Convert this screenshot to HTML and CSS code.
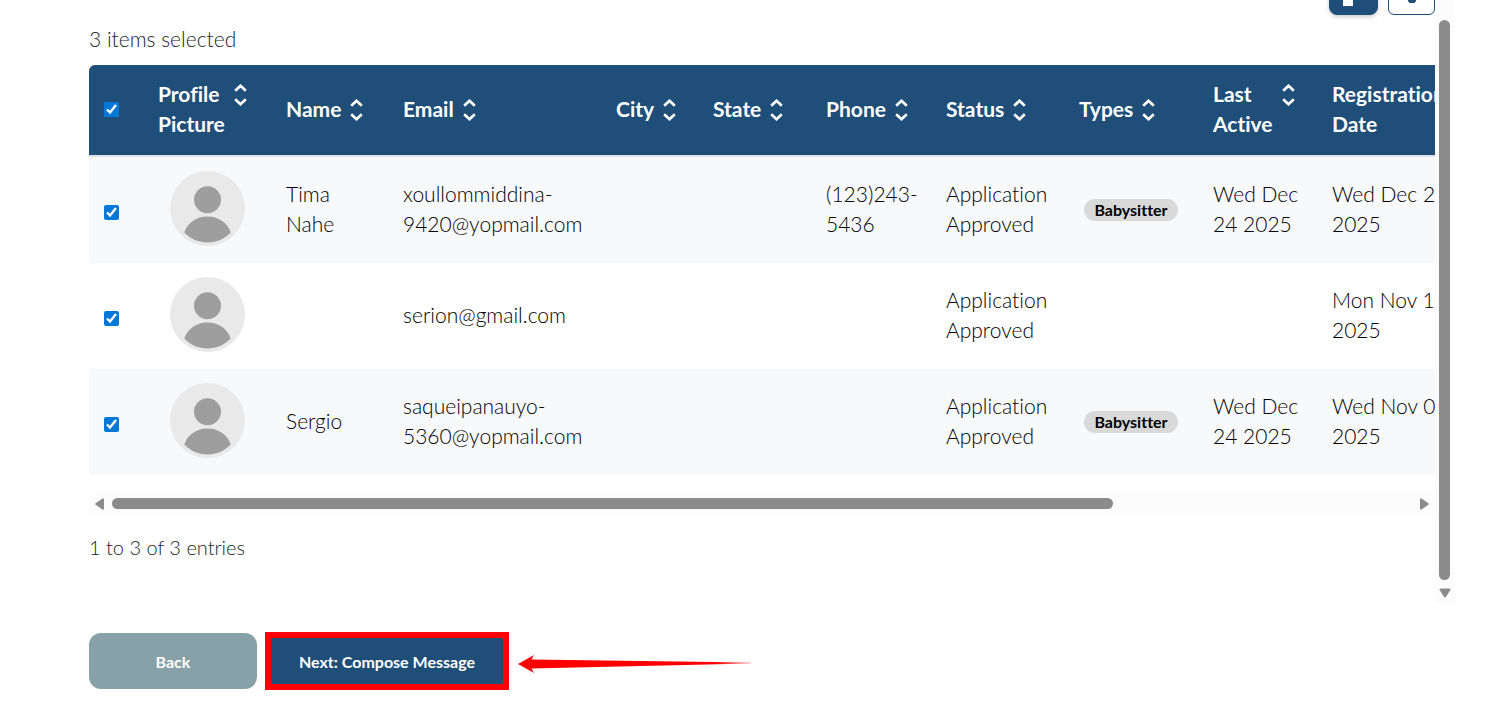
FILE: index.html
```html
<!DOCTYPE html>
<html lang="en">

<head>
    <meta charset="UTF-8">
    <meta name="viewport" content="width=device-width, initial-scale=1.0">
    <title>Select Recipients</title>
    <link rel="stylesheet" href="styles.css">
</head>

<body>
    <!-- shared icons -->
    <svg class="sprite" width="0" height="0" aria-hidden="true">
        <symbol id="sort" viewBox="0 0 13 22">
            <path d="M1.2 6.800 6.500 1.800 11.800 6.800M1.200 15.200 6.500 20.200 11.800 15.200" fill="none" stroke="#fff" stroke-width="2.700" />
        </symbol>
        <symbol id="avatar" viewBox="0 0 75 75">
            <circle cx="37.5" cy="37.5" r="37.5" fill="#e9e9e9" />
            <circle cx="37.5" cy="28.8" r="13.5" fill="#9e9e9e" />
            <path d="M14.3 61.5C17.5 51.500 27 45.500 37.500 45.500S57.500 51.500 60.700 61.500C54.500 68 46.500 71.500 37.500 71.500S20.500 68 14.300 61.500Z" fill="#9e9e9e" />
        </symbol>
        <symbol id="tri" viewBox="0 0 9 12">
            <path d="M8 1.300V10.700L1.200 6Z" fill="#8b8b8b" stroke="#8b8b8b" stroke-width="2" stroke-linejoin="round" />
        </symbol>
    </svg>

    <main class="page">
        <section class="panel">
            <div class="content">
                <div class="toolbar">
                    <button class="tool tool-solid" type="button" aria-label="Columns">
                        <svg width="10" height="20" viewBox="0 0 10 20"><path d="M0 0H10V20H0Z" fill="#fff" /></svg>
                    </button>
                    <button class="tool tool-outline" type="button" aria-label="Filter">
                        <svg width="20" height="18" viewBox="0 0 20 18"><path d="M0 0H20L14 10V16L12.500 18H7.500L6 16V10Z" fill="#1f4e78" /></svg>
                    </button>
                </div>

                <p class="selected">3 items selected</p>

                <div class="table-wrap">
                    <table class="users">
                        <colgroup>
                            <col class="c-check"><col class="c-picture"><col class="c-name"><col class="c-email">
                            <col class="c-city"><col class="c-state"><col class="c-phone"><col class="c-status">
                            <col class="c-types"><col class="c-active"><col class="c-registered">
                        </colgroup>
                        <thead>
                            <tr>
                                <th class="check"><input type="checkbox" aria-label="Select all" checked></th>
                                <th><button class="sort" type="button"><span>Profile<br>Picture</span><svg><use href="#sort" /></svg></button></th>
                                <th><button class="sort" type="button"><span>Name</span><svg><use href="#sort" /></svg></button></th>
                                <th><button class="sort" type="button"><span>Email</span><svg><use href="#sort" /></svg></button></th>
                                <th><button class="sort" type="button"><span>City</span><svg><use href="#sort" /></svg></button></th>
                                <th><button class="sort" type="button"><span>State</span><svg><use href="#sort" /></svg></button></th>
                                <th><button class="sort" type="button"><span>Phone</span><svg><use href="#sort" /></svg></button></th>
                                <th><button class="sort" type="button"><span>Status</span><svg><use href="#sort" /></svg></button></th>
                                <th><button class="sort" type="button"><span>Types</span><svg><use href="#sort" /></svg></button></th>
                                <th><button class="sort" type="button"><span>Last<br>Active</span><svg><use href="#sort" /></svg></button></th>
                                <th><button class="sort" type="button"><span>Registration<br>Date</span><svg><use href="#sort" /></svg></button></th>
                            </tr>
                        </thead>
                        <tbody>
                            <tr>
                                <td class="check"><input type="checkbox" aria-label="Select Tima Nahe" checked></td>
                                <td class="picture"><svg class="avatar"><use href="#avatar" /></svg></td>
                                <td>Tima<br>Nahe</td>
                                <td>xoullommiddina-<br>9420@yopmail.com</td>
                                <td></td>
                                <td></td>
                                <td>(123)243-<br>5436</td>
                                <td>Application<br>Approved</td>
                                <td><span class="badge">Babysitter</span></td>
                                <td>Wed Dec<br>24 2025</td>
                                <td>Wed Dec 24<br>2025</td>
                            </tr>
                            <tr>
                                <td class="check"><input type="checkbox" aria-label="Select serion@gmail.com" checked></td>
                                <td class="picture"><svg class="avatar"><use href="#avatar" /></svg></td>
                                <td></td>
                                <td>serion@gmail.com</td>
                                <td></td>
                                <td></td>
                                <td></td>
                                <td>Application<br>Approved</td>
                                <td></td>
                                <td></td>
                                <td>Mon Nov 10<br>2025</td>
                            </tr>
                            <tr>
                                <td class="check"><input type="checkbox" aria-label="Select Sergio" checked></td>
                                <td class="picture"><svg class="avatar"><use href="#avatar" /></svg></td>
                                <td>Sergio</td>
                                <td>saqueipanauyo-<br>5360@yopmail.com</td>
                                <td></td>
                                <td></td>
                                <td></td>
                                <td>Application<br>Approved</td>
                                <td><span class="badge">Babysitter</span></td>
                                <td>Wed Dec<br>24 2025</td>
                                <td>Wed Nov 05<br>2025</td>
                            </tr>
                        </tbody>
                    </table>
                </div>

                <div class="scroll-x" aria-hidden="true">
                    <svg class="tri"><use href="#tri" /></svg>
                    <div class="track"><div class="thumb"></div></div>
                    <svg class="tri tri-right"><use href="#tri" /></svg>
                </div>

                <p class="entries">1 to 3 of 3 entries</p>
            </div>

            <div class="scroll-y" aria-hidden="true">
                <div class="thumb"></div>
                <svg width="12" height="10" viewBox="0 0 12 10"><path d="M1.500 1.500H10.500L6 8.500Z" fill="#8b8b8b" stroke="#8b8b8b" stroke-width="2" stroke-linejoin="round" /></svg>
            </div>
        </section>

        <div class="actions">
            <button class="btn btn-back" type="button">Back</button>
            <button class="btn btn-next" type="button">Next: Compose Message</button>
            <svg class="arrow" width="233" height="20" viewBox="0 0 233 20" aria-hidden="true">
                <defs>
                    <linearGradient id="fade">
                        <stop offset=".85" stop-color="#f00" />
                        <stop offset="1" stop-color="#f00" stop-opacity=".3" />
                    </linearGradient>
                </defs>
                <path d="M0 10 16 1 13.500 5.500 233 8.500V9.500L13.500 14.500 16 19Z" fill="url(#fade)" />
            </svg>
        </div>
    </main>
</body>

</html>
```
FILE: styles.css
```css
* {
    box-sizing: border-box;
}

body {
    margin: 0;
    background: #fff;
    color: #212529;
    font-family: Lato, sans-serif;
    font-size: 21px;
    font-weight: 300;
    font-variant-ligatures: none;
    line-height: 30px;
    overflow: hidden;
}

p {
    margin: 0;
}

button {
    font-family: inherit;
    cursor: pointer;
}

.sprite {
    position: absolute;
}

.page {
    padding: 0 31px 0 89px;
}

.panel {
    display: flex;
}

.content {
    flex: 1;
    min-width: 0;
    padding-bottom: 41px;
}

/* toolbar, scrolled partly out of view */
.toolbar {
    display: flex;
    justify-content: flex-end;
    align-items: flex-end;
    gap: 10px;
    height: 15px;
    margin-bottom: 9px;
}

.tool {
    display: flex;
    justify-content: center;
    align-items: flex-end;
    height: 48px;
    border: 1px solid #1f4e78;
    border-radius: 8px;
}

.tool-solid {
    width: 49px;
    padding: 0 20px 8px 8px;
    background: #1f4e78;
    box-shadow: 0 2px 4px rgba(0, 0, 0, 0.2);
}

.tool-outline {
    width: 47px;
    padding: 0 0 11px;
    border-radius: 6px;
    background: #fff;
}

.tool svg {
    flex: none;
}

.selected {
    margin-bottom: 11px;
}

.entries {
    font-size: 20px;
}

/* table */
.table-wrap {
    overflow: hidden;
    border-radius: 6px 0 0 0;
}

.users {
    width: 1756px;
    table-layout: fixed;
    border-collapse: separate;
    border-spacing: 0;
    color: #000;
}

.c-check { width: 53px; }
.c-picture { width: 128px; }
.c-name { width: 117px; }
.c-email { width: 213px; }
.c-city { width: 97px; }
.c-state { width: 113px; }
.c-phone { width: 120px; }
.c-status { width: 133px; }
.c-types { width: 134px; }
.c-active { width: 119px; }

.users th,
.users td {
    padding: 14px 0 16px 16px;
    text-align: left;
    vertical-align: middle;
    white-space: nowrap;
}

.users th {
    background: #1f4e78;
    border-bottom: 2px solid #dee2e6;
}

.users td {
    height: 106px;
    padding-bottom: 17px;
}

.users tr:nth-child(odd) td {
    background: #f8f9fb;
}

.users .picture {
    padding-left: 28px;
}

.users .check {
    padding-left: 15px;
}

.users input {
    display: block;
    width: 15px;
    height: 15px;
    margin: 0;
    accent-color: #0078d7;
}

.users td input {
    margin-top: 8px;
}

.sort {
    display: flex;
    align-items: flex-start;
    gap: 9px;
    padding: 0;
    border: 0;
    background: none;
    color: #fff;
    font-size: 21px;
    font-weight: 700;
    font-variant-ligatures: none;
    line-height: 30px;
    text-align: left;
}

.sort svg {
    width: 13px;
    height: 22px;
    margin-top: 5px;
}

.avatar {
    display: block;
    width: 75px;
    height: 75px;
}

.badge {
    display: block;
    width: 94px;
    margin: 2px 0 0 5px;
    border-radius: 11px;
    background: #d9d9d9;
    font-size: 16px;
    font-weight: 700;
    line-height: 22px;
    text-align: center;
}

/* scrollbars */
.scroll-x {
    display: flex;
    align-items: center;
    gap: 8px;
    height: 19px;
    margin: 19px 0;
    padding: 0 6px;
    background: #fcfcfc;
}

.track {
    flex: 1;
}

.thumb {
    border-radius: 6px;
    background: #8b8b8b;
}

.scroll-x .thumb {
    width: 77%;
    height: 11px;
}

.tri {
    width: 9px;
    height: 12px;
}

.tri-right {
    transform: scaleX(-1);
}

.scroll-y {
    display: flex;
    flex-direction: column;
    align-items: center;
    gap: 8px;
    width: 19px;
    padding: 20px 0 5px;
    background: #fcfcfc;
}

.scroll-y .thumb {
    flex: 1;
    width: 11px;
}

/* wizard buttons */
.actions {
    display: flex;
    align-items: center;
    gap: 8px;
    margin-top: 29px;
}

.btn {
    padding: 0;
    border: 0;
    color: #fff;
    font-size: 16px;
    font-weight: 700;
}

.btn-back {
    width: 168px;
    height: 56px;
    border-radius: 12px;
    background: #86a1a7;
}

.btn-next {
    width: 244px;
    height: 58px;
    border: 6px solid #f00;
    background: #1f4e78;
}

.arrow {
    margin: 6px 0 0 1px;
}
```
